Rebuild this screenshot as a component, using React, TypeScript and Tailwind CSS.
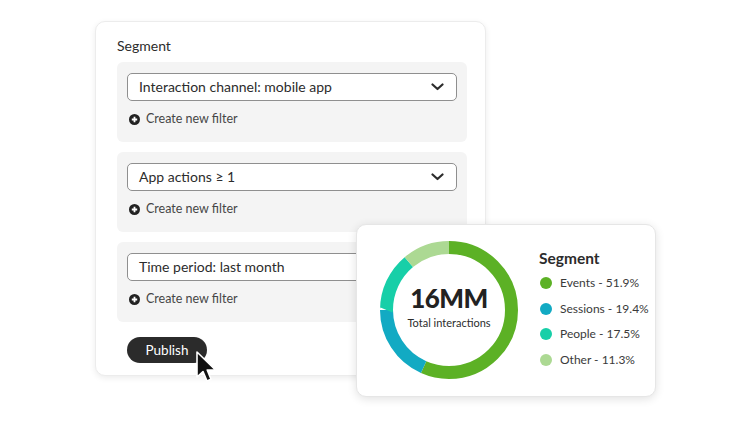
import React from "react";

const font = { fontFamily: "Lato, 'Open Sans', sans-serif" };

function Chevron() {
  return (
    <svg width="13" height="8" viewBox="0 0 13 8" fill="none">
      <path d="M1.5 1.5 L6.5 6 L11.5 1.5" stroke="#2c2c2c" strokeWidth="2.2" strokeLinecap="round" strokeLinejoin="round" />
    </svg>
  );
}

function PlusCircle() {
  return (
    <svg width="11" height="11" viewBox="0 0 11 11">
      <circle cx="5.5" cy="5.5" r="5.5" fill="#222" />
      <path d="M5.5 2.8 V8.2 M2.8 5.5 H8.2" stroke="#fff" strokeWidth="1.8" />
    </svg>
  );
}

function FilterBlock({ label }: { label: string }) {
  return (
    <div className="w-[350px] h-[80px] rounded-[6px] bg-[#f4f4f4] pt-[11px] px-[10px]">
      <div className="h-[28px] rounded-[5px] border border-[#8f8f8f] bg-white flex items-center justify-between pl-[11px] pr-[12px]">
        <span className="text-[14px] text-[#2c2c2c] leading-none whitespace-nowrap">{label}</span>
        <Chevron />
      </div>
      <div className="mt-[9px] h-[18px] flex items-center gap-[6px] pl-[2px]">
        <PlusCircle />
        <span className="text-[12.5px] text-[#464646] whitespace-nowrap">Create new filter</span>
      </div>
    </div>
  );
}

function Donut() {
  const segs = [
    { start: 0, end: 204, color: "#5cb125" },
    { start: 204, end: 270, color: "#12aac3" },
    { start: 270, end: 320, color: "#17cfa8" },
    { start: 320, end: 360, color: "#acd993" },
  ];
  const r = 62.5;
  const c = 69;
  return (
    <svg width="138" height="138" viewBox="0 0 138 138">
      {segs.map((s, i) => (
        <circle
          key={i}
          cx={c}
          cy={c}
          r={r}
          fill="none"
          stroke={s.color}
          strokeWidth="13"
          pathLength={360}
          strokeDasharray={`${s.end - s.start} ${360 - (s.end - s.start)}`}
          strokeDashoffset={-s.start}
          transform={`rotate(-90 ${c} ${c})`}
        />
      ))}
    </svg>
  );
}

function Legend() {
  const items = [
    { label: "Events - 51.9%", color: "#5cb125" },
    { label: "Sessions - 19.4%", color: "#12aac3" },
    { label: "People - 17.5%", color: "#17cfa8" },
    { label: "Other - 11.3%", color: "#acd993" },
  ];
  return (
    <div className="flex flex-col">
      <div className="text-[15.5px] font-bold text-[#2c2c2c] h-[22px] leading-[22px] whitespace-nowrap">Segment</div>
      <div className="flex flex-col gap-[7.5px] mt-[5px]">
        {items.map((it) => (
          <div key={it.label} className="flex items-center gap-[8px] h-[18px]">
            <span className="w-[12px] h-[12px] rounded-full ml-[1px] shrink-0" style={{ backgroundColor: it.color }} />
            <span className="text-[12px] text-[#3a3a3a] whitespace-nowrap">{it.label}</span>
          </div>
        ))}
      </div>
    </div>
  );
}

function Cursor() {
  return (
    <svg width="24" height="34" viewBox="0 0 24 34" className="absolute left-[195px] top-[350px]">
      <path
        d="M2 2 L2 27 L8 21.5 L12 31 L16 29.3 L12.2 20 L20.5 20 Z"
        fill="#111"
        stroke="#fff"
        strokeWidth="1.6"
        strokeLinejoin="round"
      />
    </svg>
  );
}

export default function App() {
  return (
    <div className="relative w-[750px] h-[423px] bg-white overflow-hidden" style={font}>
      <div className="pt-[21px] pl-[95px]">
        <div className="w-[391px] h-[355px] rounded-[10px] bg-white border border-[#ececec] shadow-[0_2px_6px_rgba(0,0,0,0.08)] pt-[14px] pl-[21px]">
          <div className="h-[20px] text-[14px] leading-[20px] text-[#2c2c2c]">Segment</div>
          <div className="mt-[6px] flex flex-col gap-[10px]">
            <FilterBlock label="Interaction channel: mobile app" />
            <FilterBlock label="App actions ≥ 1" />
            <FilterBlock label="Time period: last month" />
          </div>
          <button className="mt-[15px] ml-[10px] w-[80px] h-[26px] rounded-full bg-[#2b2b2b] text-white text-[13.5px] flex items-center justify-center">
            Publish
          </button>
        </div>
      </div>

      <Cursor />

      <div className="absolute left-[356px] top-[224px] w-[300px] h-[173px] rounded-[10px] bg-white border border-[#e6e6e6] shadow-[0_2px_10px_rgba(0,0,0,0.12)] flex">
        <div className="relative ml-[23px] mt-[16px] w-[138px] h-[138px] shrink-0">
          <Donut />
          <div className="absolute inset-0 flex flex-col items-center justify-center">
            <div className="text-[26px] font-black text-[#222] leading-[30px] tracking-[-0.5px] mt-[-6px]">16MM</div>
            <div className="text-[11px] text-[#2c2c2c] leading-[16px] mt-[2px]">Total interactions</div>
          </div>
        </div>
        <div className="ml-[21px] mt-[22px]">
          <Legend />
        </div>
      </div>
    </div>
  );
}
